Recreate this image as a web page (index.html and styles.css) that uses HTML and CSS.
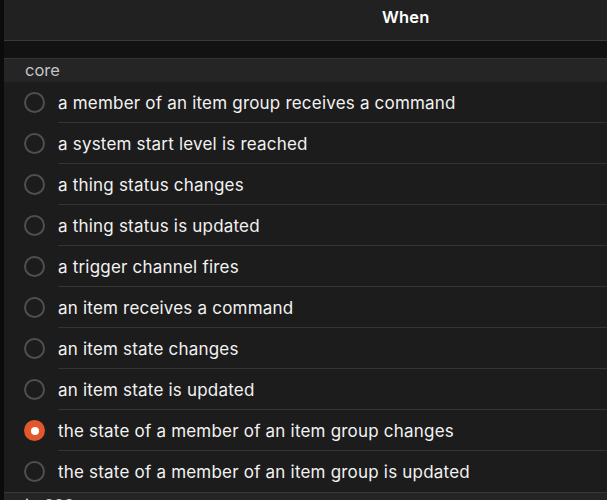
FILE: index.html
```html
<!DOCTYPE html>
<html>
<head>
<meta charset="utf-8">
<link rel="stylesheet" href="styles.css">
</head>
<body>
<div class="page">
  <div class="edge"></div>
  <div class="panel">
    <div class="navbar"><span class="title">When</span></div>
    <div class="gap"></div>
    <div class="group-title">core</div>
    <ul class="list">
      <li class="item"><span class="radio"></span><span class="label">a member of an item group receives a command</span></li>
      <li class="item"><span class="radio"></span><span class="label">a system start level is reached</span></li>
      <li class="item"><span class="radio"></span><span class="label">a thing status changes</span></li>
      <li class="item"><span class="radio"></span><span class="label">a thing status is updated</span></li>
      <li class="item"><span class="radio"></span><span class="label">a trigger channel fires</span></li>
      <li class="item"><span class="radio"></span><span class="label">an item receives a command</span></li>
      <li class="item"><span class="radio"></span><span class="label">an item state changes</span></li>
      <li class="item"><span class="radio"></span><span class="label">an item state is updated</span></li>
      <li class="item"><span class="radio checked"></span><span class="label">the state of a member of an item group changes</span></li>
      <li class="item"><span class="radio"></span><span class="label">the state of a member of an item group is updated</span></li>
    </ul>
    <div class="group-title next">jsr223</div>
  </div>
</div>
</body>
</html>
```
FILE: styles.css
```css
html, body {
  margin: 0;
  padding: 0;
  background: #1c1c1c;
}
body {
  width: 607px;
  height: 500px;
  overflow: hidden;
  font-family: Inter, "Open Sans", sans-serif;
  -webkit-font-smoothing: antialiased;
}
.page {
  display: flex;
  height: 500px;
  overflow: hidden;
}
.edge {
  width: 4px;
  flex: none;
  background: #0b0b0b;
}
.panel {
  flex: 1;
  display: flex;
  flex-direction: column;
  background: #1c1c1c;
}
.panel > * {
  flex: none;
}
.navbar {
  height: 40px;
  background: #212121;
  border-bottom: 1px solid #3a3a3a;
  display: flex;
  align-items: center;
}
.title {
  margin-left: 378px;
  margin-top: -6px;
  color: #ffffff;
  font-weight: 600;
  font-size: 16.5px;
  letter-spacing: 0.2px;
}
.gap {
  height: 17px;
  background: #121212;
  border-bottom: 1px solid #343434;
}
.group-title {
  height: 23px;
  background: #252525;
  color: #c4c4c4;
  font-size: 16.5px;
  line-height: 23px;
  padding-left: 21px;
}
.group-title.next {
  border-top: 1px solid #383838;
  height: 30px;
  line-height: 24px;
}
.list {
  list-style: none;
  margin: 0;
  padding: 0;
}
.item {
  display: flex;
  align-items: center;
  height: 41px;
}
.radio {
  box-sizing: border-box;
  width: 21px;
  height: 21px;
  margin-left: 20px;
  margin-right: 13px;
  border: 2px solid #4f4f4f;
  border-radius: 50%;
  flex: none;
}
.radio.checked {
  border: none;
  background: #e2572c;
  position: relative;
}
.radio.checked::after {
  content: "";
  position: absolute;
  width: 8px;
  height: 8px;
  border-radius: 50%;
  background: #ffffff;
  left: 6.5px;
  top: 6.5px;
}
.label {
  flex: 1;
  align-self: stretch;
  display: flex;
  align-items: center;
  color: #f2f2f2;
  font-size: 17px;
  letter-spacing: 0.2px;
}
.item + .item .label {
  border-top: 1px solid #343434;
  margin-top: -1px;
}
```
